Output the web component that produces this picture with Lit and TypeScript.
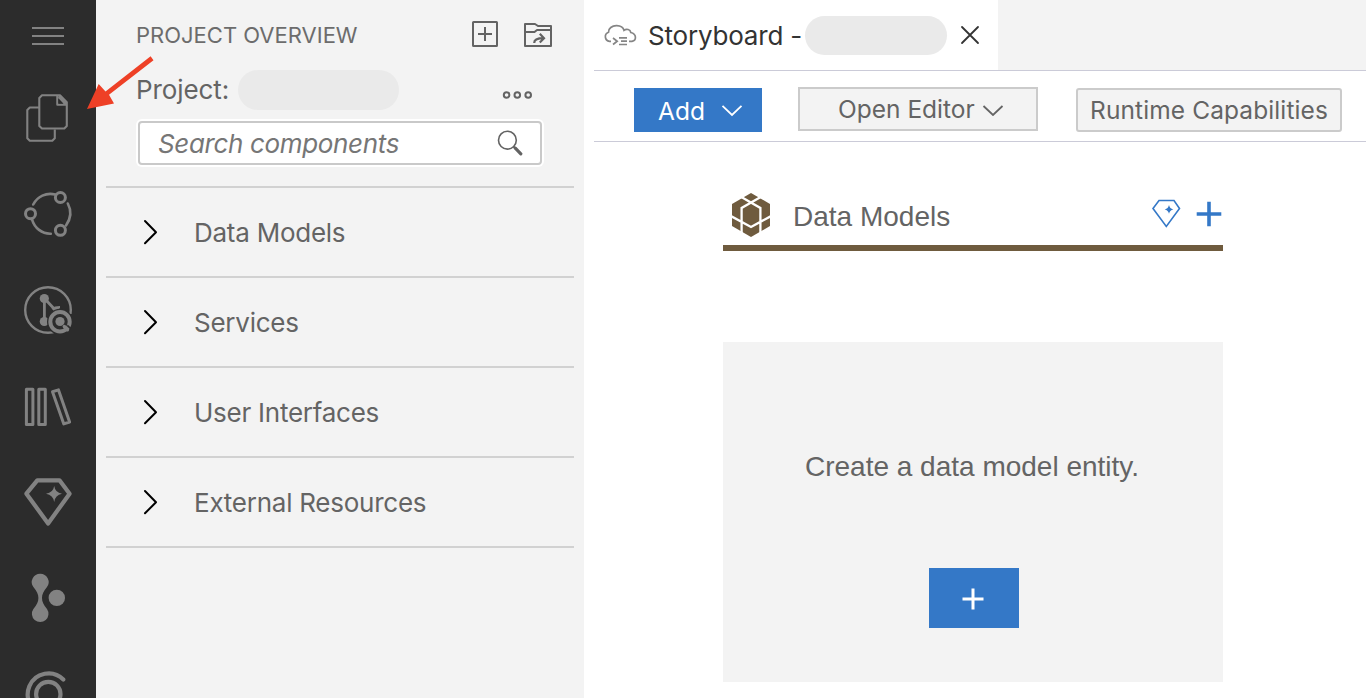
import { LitElement, html, css } from "lit";
import { customElement, state } from "lit/decorators.js";

@customElement("activity-bar")
class ActivityBar extends LitElement {
  static styles = css`
    :host { display: flex; flex-direction: column; background: #2c2c2c; overflow: hidden; }
    svg { display: block; width: 96px; height: 96px; flex: none; fill: none; stroke: #828282; }
    .menu { height: 70px; }
    .solid { fill: #828282; stroke: none; }
    .mask { fill: #2c2c2c; stroke: none; }
  `;
  render() {
    return html`
      <svg class="menu" viewBox="0 0 96 70" stroke-width="2"><path d="M32 28H64M32 36H64M32 44H64" /></svg>
      <svg viewBox="0 70 96 96" stroke-width="2.1" stroke-linejoin="round">
        <path d="M39 107.5H29.8L27.3 110V138.3L29.8 140.8H52.3L54.8 138.3V129.5" />
        <path d="M42 95.3H60L66.8 102.3V126L64.3 128.5H42L39.3 126V98Z" />
        <path d="M57.3 95.5V104.7H66.5" />
        <path class="solid" d="M59 95L67 103V104.5H64L58 98Z" />
        <path class="mask" d="M58.4 98.6L63.2 103.6H58.4Z" />
      </svg>
      <svg viewBox="0 166 96 96" stroke-width="3">
        <circle cx="60.4" cy="197.5" r="5" /><circle cx="30.5" cy="213.7" r="5" /><circle cx="60.4" cy="230.3" r="5" />
        <path stroke-width="2.6" stroke-linecap="round" d="M33.2 204.5C37.5 196.5 46 192.2 55.3 194.5M67.8 203.5C71.3 210 71.3 218 66 225.5M32 219.3C34.5 228 42 234 50.8 233.7" />
      </svg>
      <svg viewBox="0 262 96 96" stroke-width="2.4">
        <circle cx="48" cy="310" r="22.8" />
        <path stroke-width="2.8" d="M44.4 299V321M45 299L55 309.8" />
        <path class="solid" d="M51.5 308.5L55 306.5L60 306L60 308.2L54.5 311.5Z" />
        <circle class="solid" cx="44.3" cy="298.5" r="4.6" /><circle class="solid" cx="44.3" cy="321.5" r="4.6" />
        <circle class="mask" cx="60" cy="321.8" r="13" />
        <path class="mask" d="M60 314H74V336H60Z" />
        <circle cx="60" cy="321.8" r="9.7" stroke-width="4" />
        <circle class="solid" cx="60" cy="321.5" r="4.6" />
        <path stroke-width="3.4" stroke-linecap="round" d="M64.3 326.5L67.5 329.8" />
        <path stroke="#2c2c2c" stroke-width="1.6" d="M67.3 325.3L70.8 328.6" />
      </svg>
      <svg viewBox="0 358 96 96" stroke-width="3" stroke-linejoin="round">
        <path d="M26.4 389.2H32.9V424.4H26.4ZM38.8 389.2H45.3V424.4H38.8ZM52.5 391.7L58.5 389.9L69.6 422L63.8 423.9Z" />
      </svg>
      <svg viewBox="0 454 96 96" stroke-width="4.2" stroke-linejoin="round">
        <path d="M37.3 480.3H59.5L69.6 493.7L48.1 523.5L26.4 493.7Z" />
        <path class="solid" d="M54.2 486Q55.2 492.7 62 493.7Q55.2 494.9 54.2 502Q53.2 494.9 46 493.7Q53.2 492.7 54.2 486Z" />
      </svg>
      <svg viewBox="0 550 96 96">
        <path class="solid" d="M40.2 573.8A8.3 8.3 0 0 1 47 587C43.5 591.5 42 594 42 598S43.5 604.5 47 609A8.3 8.3 0 1 1 33.4 609C36.9 604.5 38.4 602 38.4 598S36.9 591.5 33.4 587A8.3 8.3 0 0 1 40.2 573.8Z" />
        <circle class="solid" cx="56.8" cy="597.9" r="8.2" />
      </svg>
      <svg viewBox="0 646 96 96" stroke-width="4.2">
        <circle cx="48.3" cy="694" r="12.2" />
        <path stroke-linecap="round" d="M63.3 679.5A20.8 20.8 0 1 0 48.3 715" />
      </svg>
    `;
  }
}

@customElement("project-panel")
class ProjectPanel extends LitElement {
  @state() groups = ["Data Models", "Services", "User Interfaces", "External Resources"];
  static styles = css`
    :host { display: block; background: #f3f3f3; color: #646464; font: 26px/32px Inter, "Noto Sans", sans-serif; }
    svg { display: block; flex: none; fill: none; stroke: #636363; }
    .head { display: flex; align-items: center; height: 70px; padding: 0 30px 0 40px; }
    .title { flex: 1; font-size: 22px; color: #6c6c6c; }
    .new { margin-right: 24px; }
    .head svg { margin-bottom: 2px; }
    .project { display: flex; align-items: center; height: 40px; padding: 0 50px 0 40px; }
    .name { letter-spacing: -0.1px; width: 102px; }
    .pill { width: 161px; height: 40px; border-radius: 20px; background: #eaeaea; }
    .more { margin: 9px 0 0 auto; }
    .search { display: flex; align-items: center; box-sizing: border-box; width: 404px; height: 44px; margin: 11px 0 0 42px; padding: 0 17px 0 18px; border: 2px solid #c9c9c9; border-radius: 4px; background: #fff; box-shadow: 0 0 0 2px #fff; }
    .hint { flex: 1; padding-top: 2px; font-style: italic; color: #767676; letter-spacing: -0.35px; }
    .tree { margin: 21px 10px 0; border-top: 2px solid #d1d1d1; }
    .row { display: flex; align-items: center; box-sizing: border-box; height: 90px; padding-left: 36px; border-bottom: 2px solid #d1d1d1; }
    .label { padding: 2px 0 0 34px; letter-spacing: -0.25px; }
  `;
  render() {
    return html`
      <div class="head">
        <span class="title">PROJECT OVERVIEW</span>
        <svg class="new" width="28" height="28" viewBox="471 20 28 28" stroke-width="2"><rect x="473" y="22" width="24" height="24" rx="0.5" /><path d="M485 27V41M478 34H492" /></svg>
        <svg width="31" height="28" viewBox="523 20 31 28" stroke-width="2"><path stroke-linejoin="round" d="M525 24H535L538 26H551V46H525ZM525 32H534.5L537 30H551" /><path stroke-width="2.2" d="M534.2 43C534.2 39.5 537 38.2 543.5 38.2M539.8 33.8L544 38.2L539.8 42.5" /></svg>
      </div>
      <div class="project">
        <span class="name">Project:</span><span class="pill"></span>
        <svg class="more" width="32" height="10" viewBox="502 90 32 10" stroke-width="2"><circle cx="506.6" cy="95" r="2.8" /><circle cx="517.3" cy="95" r="2.8" /><circle cx="528.2" cy="95" r="2.8" /></svg>
      </div>
      <div class="search">
        <span class="hint">Search components</span>
        <svg width="26" height="26" viewBox="497 130 26 26" stroke-width="1.6"><circle cx="507.4" cy="140.2" r="8.9" /><path stroke-width="2" d="M513.5 146.5L516 149" /><path stroke-width="3.2" stroke-linecap="round" d="M515.3 148.2L520.8 153.8" /></svg>
      </div>
      <div class="tree">
        ${this.groups.map((g) => html`<div class="row">
          <svg width="18" height="26" viewBox="0 0 18 26"><path stroke="#000" stroke-width="2" stroke-linejoin="round" stroke-linecap="round" d="M3 2L14 13.2L3 24.3" /></svg>
          <span class="label">${g}</span>
        </div>`)}
      </div>
    `;
  }
}

@customElement("story-board")
class StoryBoard extends LitElement {
  static styles = css`
    :host { display: block; background: #fff; color: #646464; font: 26px/32px Inter, "Noto Sans", sans-serif; }
    svg { display: block; flex: none; fill: none; stroke: currentColor; }
    .tabs { display: flex; height: 70px; background: #f3f3f3; }
    .tab { display: flex; align-items: center; box-sizing: border-box; width: 414px; padding: 0 18px 0 19px; background: #fff; color: #333; }
    .cloud { color: #858585; }
    .name { box-sizing: border-box; width: 168px; padding: 2px 0 0 11px; white-space: nowrap; letter-spacing: -0.2px; }
    .pill { width: 142px; height: 39px; margin-right: auto; border-radius: 20px; background: #eaeaea; }
    .tools { display: flex; align-items: flex-start; box-sizing: border-box; height: 72px; margin-left: 10px; padding: 7px 0 0 40px; border: solid #cbcbd8; border-width: 1px 0; font-size: 24.5px; }
    .btn { display: flex; align-items: center; box-sizing: border-box; height: 44px; margin-top: 10px; white-space: nowrap; }
    .add { width: 128px; padding: 1px 19px 0 24px; background: #3478c7; color: #fff; justify-content: space-between; }
    .editor { width: 240px; margin: 9px 38px 0 36px; padding: 0 0 0 38px; gap: 7px; border: 2px solid #cbcbcb; background: #f3f3f3; }
    .runtime { width: 266px; justify-content: center; border: 2px solid #cbcbcb; border-radius: 3px; background: #f3f3f3; letter-spacing: 0.1px; }
    .canvas { width: 500px; padding: 50px 0 0 139px; font: 28px/32px "Liberation Sans", Arial, sans-serif; }
    .heading { display: flex; align-items: center; box-sizing: border-box; height: 59px; padding: 0 1px 6px 8px; border-bottom: 6px solid #6f5b3e; }
    .cube { margin-bottom: 2px; }
    .title { flex: 1; margin: 2px 0 0 22px; }
    .gem, .plus { margin-bottom: 4px; color: #3478c7; }
    .gem { margin: 0 15px 6px 0; }
    .card { display: flex; flex-direction: column; align-items: center; box-sizing: border-box; height: 340px; margin-top: 91px; padding-top: 109px; background: #f3f3f3; }
    .prompt { margin-right: 2px; }
    .create { display: flex; align-items: center; justify-content: center; box-sizing: border-box; width: 90px; height: 60px; margin: 85px 0 0 2px; padding: 1px 2px 0 0; background: #3478c7; color: #fff; }
  `;
  render() {
    return html`
      <div class="tabs"><div class="tab">
        <svg class="cloud" width="34" height="26" viewBox="603 22 34 26" stroke-width="1.7"><path d="M611 41.3H609.5A4.7 4.7 0 0 1 608.5 32.2C608.3 28.5 612 25.5 616.8 25.7C620.5 25.8 623.2 27.5 624 30.3C626.5 28.3 630.3 29.5 630.8 32.5C636.8 34 636.7 40.5 632 41.3H629" /><path d="M613 38L617.2 41.2L613 44.5M619 37.8H627M621 41.2H627M619 44.5H627" /></svg>
        <span class="name">Storyboard -</span><span class="pill"></span>
        <svg width="20" height="20" viewBox="0 0 20 20" stroke-width="1.8"><path stroke-linecap="round" d="M2 2L18 18M18 2L2 18" /></svg>
      </div></div>
      <div class="tools">
        <div class="btn add"><span>Add</span><svg width="22" height="14" viewBox="0 0 22 14" stroke-width="1.8"><path d="M1.5 1.8L11 11L20.5 1.8" /></svg></div>
        <div class="btn editor"><span>Open Editor</span><svg width="22" height="14" viewBox="0 0 22 14" stroke-width="1.8"><path d="M1.5 4L11 13L20.5 4" /></svg></div>
        <div class="btn runtime">Runtime Capabilities</div>
      </div>
      <div class="canvas">
        <div class="heading">
          <svg class="cube" width="40" height="46" viewBox="731 192 40 46"><path fill="#6f5b3e" stroke="none" d="M751 193L770 204V226L751 237L732 226V204Z" /><path stroke="#fff" stroke-width="2.3" d="M741.6 236V208L762 196.2M760.4 236V208L740 196.2M730.5 215.8L751 227L771.5 215.8" /></svg>
          <span class="title">Data Models</span>
          <svg class="gem" width="30" height="30" viewBox="1151 198 30 30" stroke-width="1.6"><path d="M1159 200.5H1174L1179.5 208.5L1166.3 226.5L1153 208.5Z" /><path fill="currentColor" stroke="none" d="M1169 205Q1169.7 208.6 1173.3 209.4Q1169.7 210.2 1169 213.8Q1168.3 210.2 1164.7 209.4Q1168.3 208.6 1169 205Z" /></svg>
          <svg class="plus" width="26" height="26" viewBox="0 0 26 26" stroke-width="3.6"><path d="M13 0.7V25.3M0.7 13H25.3" /></svg>
        </div>
        <div class="card">
          <span class="prompt">Create a data model entity.</span>
          <div class="create"><svg width="22" height="22" viewBox="0 0 22 22" stroke-width="3"><path d="M11 0.5V21.5M0.5 11H21.5" /></svg></div>
        </div>
      </div>
    `;
  }
}

@customElement("app-root")
class AppRoot extends LitElement {
  static styles = css`
    :host { display: grid; grid-template-columns: 96px 488px 1fr; grid-template-rows: 698px; position: relative; width: 1366px; height: 698px; overflow: hidden; }
    .arrow { position: absolute; left: 84px; top: 52px; }
  `;
  render() {
    return html`
      <activity-bar></activity-bar>
      <project-panel></project-panel>
      <story-board></story-board>
      <svg class="arrow" width="72" height="60" viewBox="84 52 72 60"><path fill="#ee4026" d="M150.6 56.3L153.5 60.3L109 94.8L114 103.5L87 109L98.7 84L105.5 91.5Z" /></svg>
    `;
  }
}
